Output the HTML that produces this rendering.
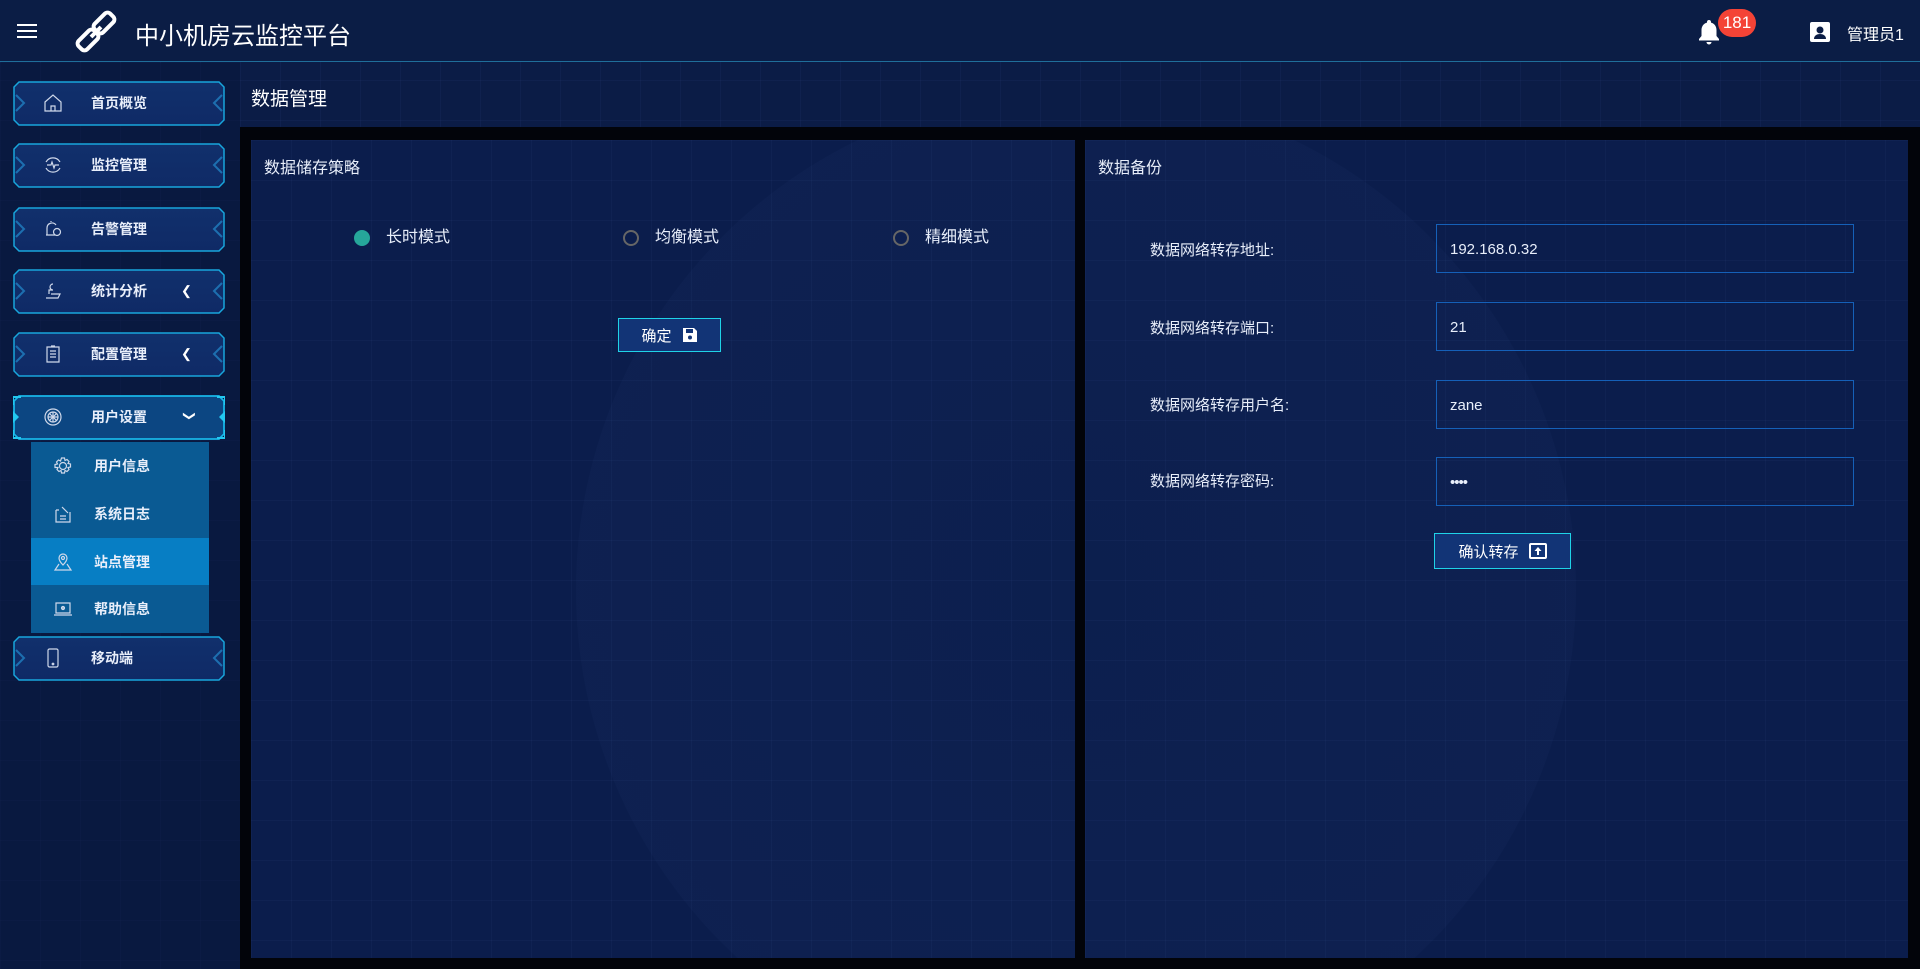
<!DOCTYPE html>
<html><head><meta charset="utf-8">
<style>
*{margin:0;padding:0;box-sizing:border-box}
html,body{width:1920px;height:969px;overflow:hidden}
body{background:#0b1c46;font-family:"Liberation Sans","Noto Sans CJK SC",sans-serif;color:#fff;position:relative}
.grid{position:absolute;inset:0;background-image:linear-gradient(rgba(60,90,150,.09) 1px,transparent 1px),linear-gradient(90deg,rgba(60,90,150,.09) 1px,transparent 1px);background-size:40px 40px}
.header{position:absolute;left:0;top:0;width:1920px;height:62px;background:#0b1d45;border-bottom:1px solid #1f6e9a}
.abs{position:absolute}
.menu{position:absolute;left:13px;width:212px;height:45px}
.menu svg{position:absolute;left:0;top:0}
.menu .t{position:absolute;left:78px;top:0;line-height:45px;font-size:14px;font-weight:bold;color:#e8eefa}
.menu .ic{position:absolute;left:30px;top:12px}
.menu .ar{position:absolute;left:168px;top:14px;font-size:13px}
.sub{position:absolute;left:31px;width:178px;height:48px;background:#0a5a93}
.sub .t{position:absolute;left:63px;line-height:48px;font-size:14px;font-weight:bold;color:#e8eefa}
.sub .ic{position:absolute;left:22px;top:14px}
.content{position:absolute;left:240px;top:127px;width:1680px;height:842px;background:#02040a;overflow:hidden}
.panel{position:absolute;top:13px;height:818px;background:#0b1d4c;background-image:linear-gradient(rgba(60,90,150,.09) 1px,transparent 1px),linear-gradient(90deg,rgba(60,90,150,.09) 1px,transparent 1px);background-size:40px 40px;overflow:hidden}
.globe{position:absolute;width:1000px;height:1000px;border-radius:50%;background:radial-gradient(circle,rgba(45,75,135,.04) 0,rgba(45,75,135,.08) 70%,rgba(45,75,135,.02) 100%)}
.ptitle{position:absolute;left:13px;top:14px;font-size:16px;color:#e8eefa}
.radio{position:absolute;top:88px;font-size:16px;color:#e8eefa;line-height:20px}
.radio i{position:absolute;left:-32px;top:2px;width:16px;height:16px;border-radius:50%;border:2px solid #666}
.radio i.on{background:#26a69a;border-color:#26a69a}
.btn{position:absolute;border:1px solid #1fd3e8;background:#123476;font-size:15px;color:#fff;display:flex;align-items:center;justify-content:center;gap:10px}
.lab{position:absolute;left:65px;font-size:15px;color:#e8eefa}
.inp{position:absolute;left:351px;width:418px;height:49px;border:1px solid #1560b8;font-size:15px;color:#e8eefa;padding-left:13px;line-height:49px}
</style></head><body>
<div class="grid"></div>
<div class="header">
 <div class="abs" style="left:17px;top:24px;width:20px;height:2px;background:#fff;box-shadow:0 6px 0 #fff,0 12px 0 #fff"></div>
 <svg class="abs" style="left:72px;top:9px" width="50" height="46" viewBox="0 0 50 46"><g fill="none" stroke="#fff" stroke-width="4" stroke-linejoin="round"><rect x="26" y="3" width="12" height="22" rx="4" transform="rotate(45 32 14)"/><rect x="10" y="20" width="12" height="22" rx="4" transform="rotate(45 16 31)"/><line x1="19" y1="28" x2="29" y2="18"/></g></svg>
 <div class="abs" style="left:135px;top:20px;font-size:24px;line-height:34px">中小机房云监控平台</div>
 <svg class="abs" style="left:1697px;top:18px" width="24" height="28" viewBox="0 0 24 28"><path d="M12 2c-1.2 0-2 .8-2 2v.6C6.6 5.5 4.5 8.4 4.5 12v6L2 21v1.5h20V21l-2.5-3v-6c0-3.6-2.1-6.5-5.5-7.4V4c0-1.2-.8-2-2-2zM9.5 24a2.5 2.5 0 0 0 5 0z" fill="#fff"/></svg>
 <div class="abs" style="left:1718px;top:9px;width:38px;height:28px;border-radius:14px;background:#f44336;font-size:17px;line-height:28px;text-align:center">181</div>
 <svg class="abs" style="left:1810px;top:22px" width="20" height="20" viewBox="0 0 20 20"><rect x="0" y="0" width="20" height="20" rx="2" fill="#fff"/><circle cx="10" cy="8" r="3.5" fill="#0b1d45"/><path d="M4 17c0-3.5 3-5 6-5s6 1.5 6 5z" fill="#0b1d45"/></svg>
 <div class="abs" style="left:1847px;top:21px;font-size:16px">管理员1</div>
</div>

<div class="abs" style="left:0;top:63px;width:240px;height:906px;background:rgba(8,22,58,.5)"></div>
<svg width="0" height="0" style="position:absolute;left:0;top:0"><defs>
<linearGradient id="mg" x1="0" y1="0" x2="0" y2="1"><stop offset="0" stop-color="#11306c"/><stop offset="1" stop-color="#0f2a66"/></linearGradient></defs></svg>

<div class="menu" style="top:81px"><svg width="212" height="45"><polygon points="6,1 206,1 211,6 211,39 206,44 6,44 1,39 1,6" fill="url(#mg)" stroke="#18a6dc" stroke-width="1.5"/><path d="M3 14l8 8-8 8M209 14l-8 8 8 8" fill="none" stroke="#1d6fb0" stroke-width="2"/></svg>
<svg class="ic" width="20" height="20" viewBox="0 0 20 20" fill="none" stroke="#cfd8ea" stroke-width="1.2"><path d="M2 9L10 2l8 7v9H2z M8 18v-5h4v5"/></svg><div class="t">首页概览</div></div>

<div class="menu" style="top:143px"><svg width="212" height="45"><polygon points="6,1 206,1 211,6 211,39 206,44 6,44 1,39 1,6" fill="url(#mg)" stroke="#18a6dc" stroke-width="1.5"/><path d="M3 14l8 8-8 8M209 14l-8 8 8 8" fill="none" stroke="#1d6fb0" stroke-width="2"/></svg>
<svg class="ic" width="20" height="20" viewBox="0 0 20 20" fill="none" stroke="#cfd8ea" stroke-width="1.2"><path d="M3 7a8 8 0 0 1 14 0M17 13a8 8 0 0 1-14 0M4 10h4l1-3 2 6 1-3h4"/></svg><div class="t">监控管理</div></div>

<div class="menu" style="top:207px"><svg width="212" height="45"><polygon points="6,1 206,1 211,6 211,39 206,44 6,44 1,39 1,6" fill="url(#mg)" stroke="#18a6dc" stroke-width="1.5"/><path d="M3 14l8 8-8 8M209 14l-8 8 8 8" fill="none" stroke="#1d6fb0" stroke-width="2"/></svg>
<svg class="ic" width="20" height="20" viewBox="0 0 20 20" fill="none" stroke="#cfd8ea" stroke-width="1.2"><path d="M4 16V9a5 5 0 0 1 9-3M3 16h9M8 3v-1"/><circle cx="14" cy="13" r="3.5"/></svg><div class="t">告警管理</div></div>

<div class="menu" style="top:269px"><svg width="212" height="45"><polygon points="6,1 206,1 211,6 211,39 206,44 6,44 1,39 1,6" fill="url(#mg)" stroke="#18a6dc" stroke-width="1.5"/><path d="M3 14l8 8-8 8M209 14l-8 8 8 8" fill="none" stroke="#1d6fb0" stroke-width="2"/></svg>
<svg class="ic" width="20" height="20" viewBox="0 0 20 20" fill="none" stroke="#cfd8ea" stroke-width="1.2"><path d="M3 17h12l2-4H8M6 13V9h4M10 3a3 3 0 1 0 0 6"/></svg><div class="t">统计分析</div><div class="ar">&#10094;</div></div>

<div class="menu" style="top:332px"><svg width="212" height="45"><polygon points="6,1 206,1 211,6 211,39 206,44 6,44 1,39 1,6" fill="url(#mg)" stroke="#18a6dc" stroke-width="1.5"/><path d="M3 14l8 8-8 8M209 14l-8 8 8 8" fill="none" stroke="#1d6fb0" stroke-width="2"/></svg>
<svg class="ic" width="20" height="20" viewBox="0 0 20 20" fill="none" stroke="#cfd8ea" stroke-width="1.2"><path d="M4 3h12v15H4zM7 7h6M7 10h6M7 13h6M8 2h4"/></svg><div class="t">配置管理</div><div class="ar">&#10094;</div></div>

<div class="menu" style="top:395px"><svg width="212" height="45"><polygon points="6,1 206,1 211,6 211,39 206,44 6,44 1,39 1,6" fill="#0c4682" stroke="#18b6e8" stroke-width="1.8"/><path d="M0 10v-8h8M212 10v-8h-8M0 35v8h8M212 35v8h-8" fill="none" stroke="#22c8f0" stroke-width="2"/><path d="M0 16l6 6-6 6zM212 16l-6 6 6 6z" fill="#22c8f0"/></svg>
<svg class="ic" width="20" height="20" viewBox="0 0 20 20" fill="none" stroke="#cfd8ea" stroke-width="1.2"><circle cx="10" cy="10" r="8"/><circle cx="10" cy="10" r="5"/><path d="M5 10h10M10 5v10M6.5 6.5l7 7M13.5 6.5l-7 7"/></svg><div class="t">用户设置</div><div class="ar" style="font-size:12px;transform:rotate(-90deg);left:170px">&#10094;</div></div>

<div class="sub" style="top:442px"><svg class="ic" width="20" height="20" viewBox="0 0 20 20" fill="none" stroke="#cfd8ea" stroke-width="1.2"><circle cx="10" cy="10" r="3.5"/><path d="M8.5 2h3l.5 2.5 2-1 2 2-1 2 2.5.5v3l-2.5.5 1 2-2 2-2-1-.5 2.5h-3l-.5-2.5-2 1-2-2 1-2L2 11.5v-3l2.5-.5-1-2 2-2 2 1z"/></svg><div class="t">用户信息</div></div>
<div class="sub" style="top:490px"><svg class="ic" width="20" height="20" viewBox="0 0 20 20" fill="none" stroke="#cfd8ea" stroke-width="1.2"><path d="M3 6h3M3 6v12h14V8M7 12h6M7 15h6M9 3l6 6"/></svg><div class="t">系统日志</div></div>
<div class="sub" style="top:538px;background:#077ec4"><svg class="ic" width="20" height="20" viewBox="0 0 20 20" fill="none" stroke="#cfd8ea" stroke-width="1.2"><path d="M10 13s-4-4-4-7a4 4 0 0 1 8 0c0 3-4 7-4 7zM6 12l-4 6h16l-4-6"/><circle cx="10" cy="6" r="1.5"/></svg><div class="t">站点管理</div></div>
<div class="sub" style="top:585px"><svg class="ic" width="20" height="20" viewBox="0 0 20 20" fill="none" stroke="#cfd8ea" stroke-width="1.2"><path d="M3 4h14v10H3zM1 16h18M10 7v4"/><circle cx="10" cy="9" r="1.5"/></svg><div class="t">帮助信息</div></div>

<div class="menu" style="top:636px"><svg width="212" height="45"><polygon points="6,1 206,1 211,6 211,39 206,44 6,44 1,39 1,6" fill="url(#mg)" stroke="#18a6dc" stroke-width="1.5"/><path d="M3 14l8 8-8 8M209 14l-8 8 8 8" fill="none" stroke="#1d6fb0" stroke-width="2"/></svg>
<svg class="ic" width="20" height="20" viewBox="0 0 20 20" fill="none" stroke="#cfd8ea" stroke-width="1.2"><rect x="5" y="1" width="10" height="18" rx="1.5"/><circle cx="10" cy="16" r=".8"/></svg><div class="t">移动端</div></div>

<div class="abs" style="left:251px;top:84px;font-size:19px">数据管理</div>

<div class="content">
 <div class="panel" style="left:11px;width:824px">
  <div class="globe" style="left:325px;top:-50px"></div>
  <div class="ptitle">数据储存策略</div>
  <div class="radio" style="left:135px"><i class="on"></i>长时模式</div>
  <div class="radio" style="left:404px"><i></i>均衡模式</div>
  <div class="radio" style="left:674px"><i></i>精细模式</div>
  <div class="btn" style="left:367px;top:178px;width:103px;height:34px">确定<svg width="16" height="16" viewBox="0 0 16 16"><path d="M1 1h11l3 3v11H1z" fill="#fff"/><rect x="4" y="2" width="7" height="4" fill="#123476"/><circle cx="8" cy="10.5" r="2" fill="#123476"/></svg></div>
 </div>
 <div class="panel" style="left:845px;width:823px">
  <div class="globe" style="left:-509px;top:-50px"></div>
  <div class="ptitle">数据备份</div>
  <div class="lab" style="top:99px">数据网络转存地址:</div>
  <div class="inp" style="top:84px">192.168.0.32</div>
  <div class="lab" style="top:177px">数据网络转存端口:</div>
  <div class="inp" style="top:162px">21</div>
  <div class="lab" style="top:254px">数据网络转存用户名:</div>
  <div class="inp" style="top:240px">zane</div>
  <div class="lab" style="top:330px">数据网络转存密码:</div>
  <div class="inp" style="top:317px;letter-spacing:-1px">••••</div>
  <div class="btn" style="left:349px;top:393px;width:137px;height:36px">确认转存<svg width="18" height="16" viewBox="0 0 18 16"><rect x="1" y="1" width="16" height="14" rx="1" fill="none" stroke="#fff" stroke-width="2"/><path d="M9 4l-3.5 4H8v4h2V8h2.5z" fill="#fff"/></svg></div>
 </div>
</div>
</body></html>
